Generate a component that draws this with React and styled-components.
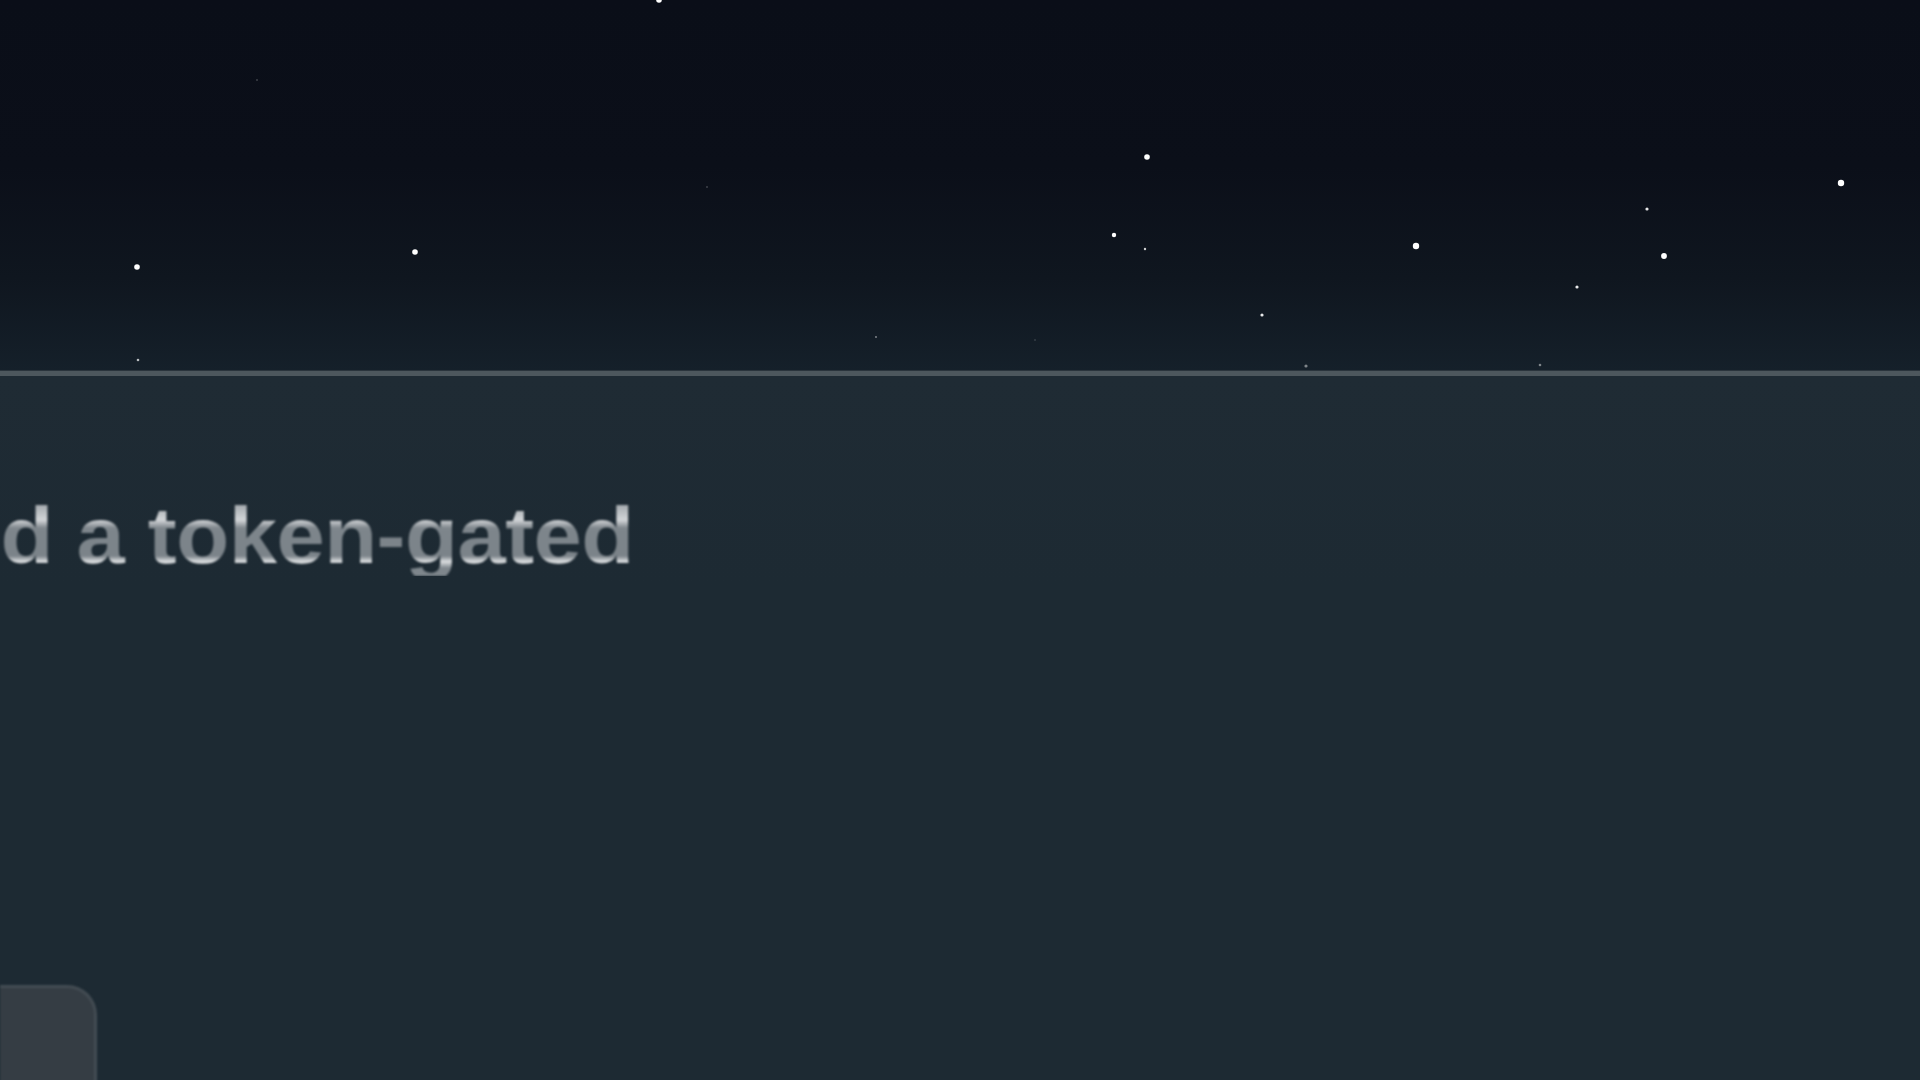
import React from 'react';
import styled, { createGlobalStyle } from 'styled-components';

const GlobalStyle = createGlobalStyle`
  html, body {
    margin: 0;
    padding: 0;
    background: #0a0e18;
    overflow: hidden;
  }
  * { box-sizing: border-box; }
`;

const stars = [
  [659, 0, 2.8, 1], [1147, 157, 2.8, 1], [1841, 183, 3.2, 1], [1647, 209, 1.6, 0.9],
  [137, 267, 2.8, 1], [415, 252, 2.8, 1], [1114, 235, 2.2, 1], [1145, 249, 1.2, 0.8],
  [1416, 246, 3.2, 1], [1664, 256, 2.9, 1], [1577, 287, 1.6, 0.9], [1262, 315, 1.6, 0.9],
  [876, 337, 0.9, 0.5], [138, 360, 1.3, 0.7], [1306, 366, 1.6, 0.45], [1540, 365, 1.3, 0.45],
  [707, 187, 0.8, 0.35], [257, 80, 0.8, 0.35], [1035, 340, 0.7, 0.3],
];

function StarField() {
  return (
    <StarSvg viewBox="0 0 1920 371" preserveAspectRatio="none">
      <defs>
        <filter id="glow" x="-2" y="-2" width="5" height="5">
          <feGaussianBlur stdDeviation="0.7" />
        </filter>
      </defs>
      {stars.map(([x, y, r, o], i) => (
        <circle key={i} cx={x} cy={y} r={r} fill="#ffffff" opacity={o} filter="url(#glow)" />
      ))}
    </StarSvg>
  );
}

export default function App() {
  return (
    <Page>
      <GlobalStyle />
      <Sky>
        <StarField />
      </Sky>
      <Horizon />
      <Panel>
        <HeadingClip>
          <Heading>Build a token-gated</Heading>
        </HeadingClip>
        <CornerCard />
      </Panel>
    </Page>
  );
}

const Page = styled.div`
  width: 1920px;
  height: 1080px;
  display: flex;
  flex-direction: column;
  overflow: hidden;
`;

const Sky = styled.div`
  height: 371px;
  flex: none;
  background: linear-gradient(
    to bottom,
    #0a0e18 0%,
    #0b0f19 45%,
    #0f161f 75%,
    #15202a 100%
  );
`;

const StarSvg = styled.svg`
  display: block;
  width: 100%;
  height: 100%;
`;

const Horizon = styled.div`
  height: 5px;
  flex: none;
  background: #4d575d;
  box-shadow: 0 -1px 0 #2a343c;
`;

const Panel = styled.div`
  flex: 1;
  display: flex;
  flex-direction: column;
  background: linear-gradient(to bottom, #1f2b34 0%, #1d2a33 30%, #1d2a33 100%);
`;

const HeadingClip = styled.div`
  width: 634px;
  margin-top: 120px;
  display: flex;
  justify-content: flex-end;
  overflow: hidden;
`;

const Heading = styled.h1`
  margin: 0;
  flex: none;
  white-space: nowrap;
  font-family: "Liberation Sans", Arial, sans-serif;
  font-weight: 700;
  font-size: 80px;
  line-height: 1;
  letter-spacing: -0.5px;
  transform: scaleX(1.085);
  transform-origin: right center;
  color: #7e868c;
  background: linear-gradient(
    to bottom,
    #8a9196 0%,
    #d2d5d8 30%,
    #7e868c 40%,
    #7b8389 75%,
    #dcdfe1 82%,
    #7e868c 90%
  );
  -webkit-background-clip: text;
  background-clip: text;
  -webkit-text-fill-color: transparent;
  filter: blur(0.9px);
`;

const CornerCard = styled.div`
  margin-top: auto;
  width: 97px;
  height: 100px;
  margin-bottom: -5px;
  background: #353d44;
  border-top: 3px solid #434c53;
  border-right: 3px solid #434c53;
  border-top-right-radius: 30px;
  filter: blur(0.8px);
`;
